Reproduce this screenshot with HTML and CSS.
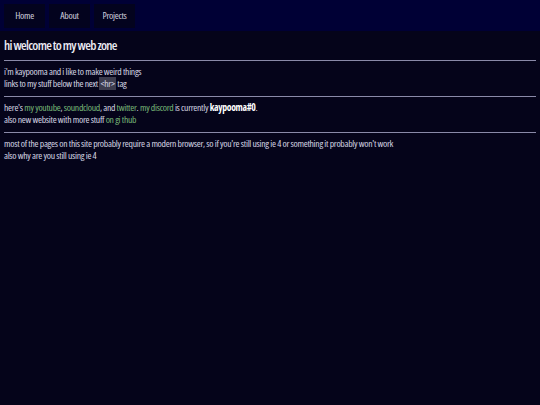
FILE: index.html
```html
<!DOCTYPE html>
<html>
<head>
<meta charset="utf-8">
<link rel="stylesheet" href="styles.css">
</head>
<body>
<nav class="nav">
  <a class="nav-btn" href="#">Home</a>
  <a class="nav-btn" href="#">About</a>
  <a class="nav-btn" href="#">Projects</a>
</nav>
<main class="content">
  <h1 class="title">hi welcome to my web zone</h1>
  <hr class="rule">
  <p class="para">i'm kaypooma and i like to make weird things<br>links to my stuff below the next <code class="code">&lt;hr&gt;</code> tag</p>
  <hr class="rule">
  <p class="para">here's <a class="link" href="#">my youtube</a>, <a class="link" href="#">soundcloud</a>, and <a class="link" href="#">twitter</a>. <a class="link" href="#">my discord</a> is currently <b class="strong">kaypooma#0</b>.<br>also new website with more stuff <a class="link" href="#">on gi thub</a></p>
  <hr class="rule">
  <p class="para">most of the pages on this site probably require a modern browser, so if you're still using ie 4 or something it probably won't work<br>also why are you still using ie 4</p>
</main>
</body>
</html>
```
FILE: styles.css
```css
html, body {
  margin: 0;
  padding: 0;
  background: #05041a;
  height: 100%;
}
body {
  font-family: "Open Sans", sans-serif;
  font-stretch: condensed;
  color: #d4d4e2;
  font-size: 9.7px;
  letter-spacing: -0.3px;
}
.nav {
  background: #000035;
  height: 31px;
  display: flex;
  align-items: center;
  gap: 4px;
  padding: 0 4px;
  box-sizing: border-box;
}
.nav-btn {
  display: flex;
  align-items: center;
  justify-content: center;
  width: 41px;
  height: 24px;
  background: #03031e;
  color: #d0d0de;
  text-decoration: none;
  font-size: 9.7px;
}
.content {
  padding: 0 4px;
}
.title {
  font-size: 13px;
  line-height: 18px;
  font-weight: 600;
  margin: 5px 0 6px;
  color: #ececf4;
  letter-spacing: -0.7px;
}
.rule {
  border: 0;
  height: 1px;
  background: #8a8aa8;
  margin: 0;
}
.para {
  margin: 5px 0 6px;
  line-height: 12px;
}
.link {
  color: #78b878;
  text-decoration: none;
}
.strong {
  color: #ffffff;
}
.code {
  font-family: inherit;
  font-size: inherit;
  background: #3c3c4e;
  padding: 0 1px;
}
```
